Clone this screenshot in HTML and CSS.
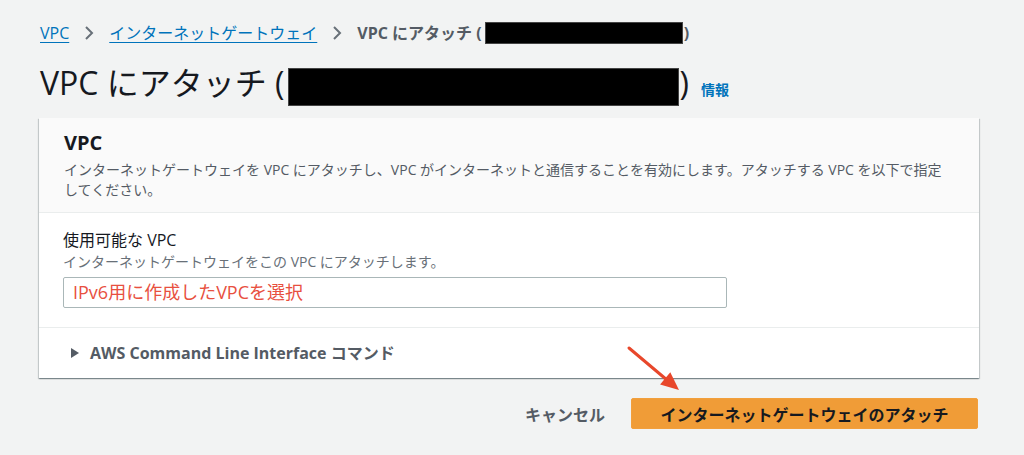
FILE: index.html
```html
<!DOCTYPE html>
<html lang="ja">
<head>
    <meta charset="UTF-8">
    <meta name="viewport" content="width=device-width, initial-scale=1.0">
    <title>VPC にアタッチ</title>
    <link rel="stylesheet" href="styles.css">
</head>
<body>
    <div class="page">
        <nav class="breadcrumbs">
            <a href="#">VPC</a>
            <svg class="crumb-sep" viewBox="0 0 12 16" width="12" height="16"><path d="M3 2l6 6-6 6" fill="none" stroke="#687078" stroke-width="2"/></svg>
            <a href="#">インターネットゲートウェイ</a>
            <svg class="crumb-sep" viewBox="0 0 12 16" width="12" height="16"><path d="M3 2l6 6-6 6" fill="none" stroke="#687078" stroke-width="2"/></svg>
            <span class="crumb-current">VPC にアタッチ (<span class="redact redact-sm"></span>)</span>
        </nav>

        <header class="page-header">
            <h1>VPC にアタッチ (<span class="redact redact-lg"></span>)</h1>
            <a href="#" class="info-link">情報</a>
        </header>

        <section class="panel">
            <div class="panel-header">
                <h2>VPC</h2>
                <p>インターネットゲートウェイを VPC にアタッチし、VPC がインターネットと通信することを有効にします。アタッチする VPC を以下で指定してください。</p>
            </div>
            <div class="panel-body">
                <label class="field-label">使用可能な VPC</label>
                <p class="field-desc">インターネットゲートウェイをこの VPC にアタッチします。</p>
                <div class="select-box">IPv6用に作成したVPCを選択</div>
            </div>
            <div class="expander">
                <svg class="caret" viewBox="0 0 10 12" width="10" height="12"><path d="M1 1l8 5-8 5z" fill="#545b64"/></svg>
                <span>AWS Command Line Interface コマンド</span>
            </div>
        </section>

        <div class="actions">
            <button class="btn-cancel">キャンセル</button>
            <button class="btn-primary">インターネットゲートウェイのアタッチ</button>
        </div>

        <!-- annotation -->
        <svg class="note-arrow" viewBox="0 0 62 52" width="62" height="52">
            <line x1="5" y1="5" x2="43" y2="37" stroke="#e8472b" stroke-width="3" stroke-linecap="round"/>
            <polygon points="36.1,41.5 46.3,29.3 55,47" fill="#e8472b"/>
        </svg>
    </div>
</body>
</html>
```

FILE: styles.css
```css
/* Base */
body {
    margin: 0;
    background: #f2f3f3;
    font-family: "Open Sans", "Noto Sans CJK JP", sans-serif;
    color: #16191f;
}

.page {
    position: relative;
    padding: 22px 45px 0 39px;
}

/* Breadcrumbs */
.breadcrumbs {
    display: flex;
    align-items: center;
    height: 22px;
    padding-left: 1px;
    font-size: 16px;
    line-height: 22px;
}
.breadcrumbs a {
    color: #0073bb;
    text-decoration: underline;
    text-underline-offset: 3px;
}
.crumb-sep {
    margin: 0 14px 0 14px;
}
.crumb-current {
    display: flex;
    align-items: center;
    color: #545b64;
    font-weight: bold;
}

.redact {
    display: inline-block;
    background: #000;
    border: 1px solid #444;
    box-sizing: border-box;
}
.redact-sm {
    width: 198px;
    height: 22px;
    margin: 0 1px 0 3px;
}
.redact-lg {
    width: 391px;
    height: 38px;
    margin: 0 1px 0 3px;
    vertical-align: -11px;
}

/* Page header */
.page-header {
    display: flex;
    align-items: baseline;
    margin-top: 19px;
    padding-left: 1px;
}
.page-header h1 {
    margin: 0;
    font-size: 32px;
    line-height: 40px;
    font-weight: normal;
}
.info-link {
    margin-left: 12px;
    font-size: 14px;
    font-weight: bold;
    color: #0073bb;
    text-decoration: none;
}

/* Panel */
.panel {
    margin-top: 12px;
    background: #fff;
    box-shadow: 0 1px 1px 0 rgba(0, 28, 36, 0.3), 1px 1px 1px 0 rgba(0, 28, 36, 0.15), -1px 1px 1px 0 rgba(0, 28, 36, 0.15);
}
.panel-header {
    background: #fafafa;
    padding: 13px 24px 12px 25px;
    border-bottom: 1px solid #eaeded;
}
.panel-header h2 {
    margin: 0;
    font-size: 20px;
    line-height: 24px;
    font-weight: bold;
}
.panel-header p {
    margin: 5px 0 0;
    font-size: 14px;
    line-height: 20px;
    color: #545b64;
}

.panel-body {
    padding: 16px 24px 19px 24px;
    border-bottom: 1px solid #eaeded;
}
.field-label {
    display: block;
    font-size: 16px;
    line-height: 22px;
}
.field-desc {
    margin: 2px 0 0;
    font-size: 14px;
    line-height: 18px;
    color: #687078;
}
.select-box {
    width: 644px;
    height: 29px;
    margin-top: 6px;
    padding: 0 9px;
    border: 1px solid #aab7b8;
    border-radius: 2px;
    font-size: 18px;
    line-height: 29px;
    color: #e8503f;
}

.expander {
    display: flex;
    align-items: center;
    padding: 14px 24px;
    font-size: 16px;
    line-height: 22px;
    font-weight: bold;
    color: #545b64;
}
.caret {
    margin: 0 10px 0 7px;
}

/* Actions */
.actions {
    display: flex;
    justify-content: flex-end;
    align-items: center;
    gap: 26px;
    margin-top: 20px;
    padding-right: 1px;
}
.actions button {
    font-family: inherit;
    font-size: 16px;
    font-weight: bold;
    cursor: pointer;
}
.btn-cancel {
    background: none;
    border: none;
    padding: 0;
    color: #545b64;
}
.btn-primary {
    width: 347px;
    height: 31px;
    background: #f09c37;
    border: 1px solid #f29f3c;
    border-radius: 2px;
    color: #16191f;
}

.note-arrow {
    position: absolute;
    left: 624px;
    top: 343px;
}
```
